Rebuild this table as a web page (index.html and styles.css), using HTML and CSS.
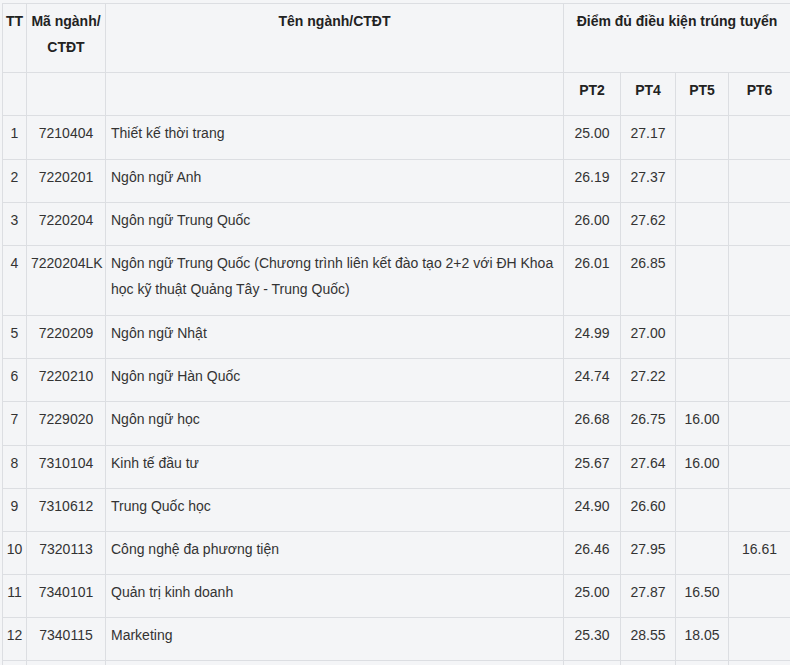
FILE: index.html
```html
<!DOCTYPE html>
<html lang="vi">
<head>
<meta charset="utf-8">
<title>Điểm trúng tuyển</title>
<link rel="stylesheet" href="styles.css">
</head>
<body>
<table class="score-table">
  <colgroup>
    <col class="c-tt">
    <col class="c-code">
    <col class="c-name">
    <col class="c-pt2">
    <col class="c-pt4">
    <col class="c-pt5">
    <col class="c-pt6">
  </colgroup>
  <thead>
    <tr>
      <th class="tt">TT</th>
      <th>Mã ngành/<br>CTĐT</th>
      <th>Tên ngành/CTĐT</th>
      <th colspan="4">Điểm đủ điều kiện trúng tuyển</th>
    </tr>
    <tr>
      <th class="tt"></th>
      <th></th>
      <th></th>
      <th>PT2</th>
      <th>PT4</th>
      <th>PT5</th>
      <th>PT6</th>
    </tr>
  </thead>
  <tbody>
    <tr><td class="tt">1</td><td class="code">7210404</td><td class="name">Thiết kế thời trang</td><td class="num">25.00</td><td class="num">27.17</td><td class="num"></td><td class="num"></td></tr>
    <tr><td class="tt">2</td><td class="code">7220201</td><td class="name">Ngôn ngữ Anh</td><td class="num">26.19</td><td class="num">27.37</td><td class="num"></td><td class="num"></td></tr>
    <tr><td class="tt">3</td><td class="code">7220204</td><td class="name">Ngôn ngữ Trung Quốc</td><td class="num">26.00</td><td class="num">27.62</td><td class="num"></td><td class="num"></td></tr>
    <tr class="tall"><td class="tt">4</td><td class="code">7220204LK</td><td class="name">Ngôn ngữ Trung Quốc (Chương trình liên kết đào tạo 2+2 với ĐH Khoa học kỹ thuật Quảng Tây - Trung Quốc)</td><td class="num">26.01</td><td class="num">26.85</td><td class="num"></td><td class="num"></td></tr>
    <tr><td class="tt">5</td><td class="code">7220209</td><td class="name">Ngôn ngữ Nhật</td><td class="num">24.99</td><td class="num">27.00</td><td class="num"></td><td class="num"></td></tr>
    <tr><td class="tt">6</td><td class="code">7220210</td><td class="name">Ngôn ngữ Hàn Quốc</td><td class="num">24.74</td><td class="num">27.22</td><td class="num"></td><td class="num"></td></tr>
    <tr><td class="tt">7</td><td class="code">7229020</td><td class="name">Ngôn ngữ học</td><td class="num">26.68</td><td class="num">26.75</td><td class="num">16.00</td><td class="num"></td></tr>
    <tr><td class="tt">8</td><td class="code">7310104</td><td class="name">Kinh tế đầu tư</td><td class="num">25.67</td><td class="num">27.64</td><td class="num">16.00</td><td class="num"></td></tr>
    <tr><td class="tt">9</td><td class="code">7310612</td><td class="name">Trung Quốc học</td><td class="num">24.90</td><td class="num">26.60</td><td class="num"></td><td class="num"></td></tr>
    <tr><td class="tt">10</td><td class="code">7320113</td><td class="name">Công nghệ đa phương tiện</td><td class="num">26.46</td><td class="num">27.95</td><td class="num"></td><td class="num">16.61</td></tr>
    <tr><td class="tt">11</td><td class="code">7340101</td><td class="name">Quản trị kinh doanh</td><td class="num">25.00</td><td class="num">27.87</td><td class="num">16.50</td><td class="num"></td></tr>
    <tr><td class="tt">12</td><td class="code">7340115</td><td class="name">Marketing</td><td class="num">25.30</td><td class="num">28.55</td><td class="num">18.05</td><td class="num"></td></tr>
    <tr class="empty"><td class="tt"></td><td class="code"></td><td class="name"></td><td class="num"></td><td class="num"></td><td class="num"></td><td class="num"></td></tr>
  </tbody>
</table>
</body>
</html>
```

FILE: styles.css
```css
html, body {
  margin: 0;
  padding: 0;
  background: #f4f5f7;
}

body {
  font-family: "Liberation Sans", Arial, Helvetica, sans-serif;
  font-size: 14px;
  line-height: 26px;
  color: #333333;
  overflow: hidden;
  height: 665px;
}

.score-table {
  margin: 3px 0 0 2px;
  border-collapse: separate;
  border-spacing: 0;
  table-layout: fixed;
  width: 789px;
  border-top: 1px solid #dcdee2;
  border-left: 1px solid #dcdee2;
}

.c-tt { width: 24px; }
.c-code { width: 79px; }
.c-name { width: 458px; }
.c-pt2 { width: 57px; }
.c-pt4 { width: 55px; }
.c-pt5 { width: 53px; }
.c-pt6 { width: 62px; }

.score-table th,
.score-table td {
  box-sizing: border-box;
  border-right: 1px solid #dcdee2;
  border-bottom: 1px solid #dcdee2;
  padding: 4px 4px 12.2px;
  vertical-align: top;
  text-align: center;
  white-space: normal;
}

.score-table th {
  font-weight: bold;
  color: #222222;
}

.score-table .tt {
  padding-left: 2px;
  padding-right: 2px;
}

.score-table .name {
  text-align: left;
  padding-left: 5px;
}

.score-table .tall td {
  padding-bottom: 13px;
}

.score-table .empty td {
  height: 43px;
}
```
